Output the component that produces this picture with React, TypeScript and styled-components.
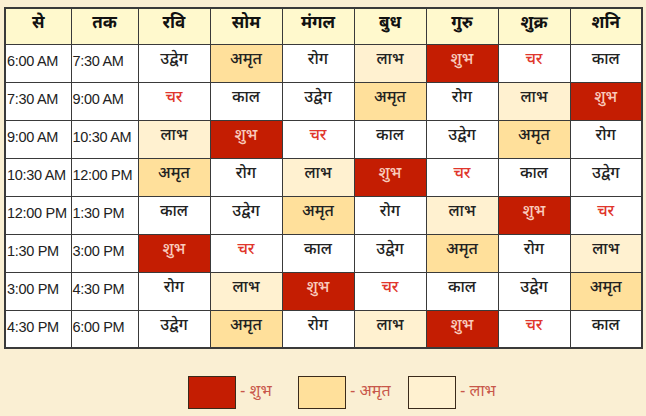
import React from 'react';
import styled, { createGlobalStyle } from 'styled-components';

type Kind = 'shubh' | 'amrit' | 'labh' | 'char' | 'plain';

const GlobalStyle = createGlobalStyle`
  html, body {
    margin: 0;
    padding: 0;
    background: #faefd3;
  }
`;

const hindiFont = `"Noto Sans Devanagari", "Lohit Devanagari", "Noto Sans", "DejaVu Sans", sans-serif`;

const days = ['रवि', 'सोम', 'मंगल', 'बुध', 'गुरु', 'शुक्र', 'शनि'];

const rows: { from: string; to: string; cells: string[] }[] = [
  { from: '6:00 AM', to: '7:30 AM', cells: ['उद्वेग', 'अमृत', 'रोग', 'लाभ', 'शुभ', 'चर', 'काल'] },
  { from: '7:30 AM', to: '9:00 AM', cells: ['चर', 'काल', 'उद्वेग', 'अमृत', 'रोग', 'लाभ', 'शुभ'] },
  { from: '9:00 AM', to: '10:30 AM', cells: ['लाभ', 'शुभ', 'चर', 'काल', 'उद्वेग', 'अमृत', 'रोग'] },
  { from: '10:30 AM', to: '12:00 PM', cells: ['अमृत', 'रोग', 'लाभ', 'शुभ', 'चर', 'काल', 'उद्वेग'] },
  { from: '12:00 PM', to: '1:30 PM', cells: ['काल', 'उद्वेग', 'अमृत', 'रोग', 'लाभ', 'शुभ', 'चर'] },
  { from: '1:30 PM', to: '3:00 PM', cells: ['शुभ', 'चर', 'काल', 'उद्वेग', 'अमृत', 'रोग', 'लाभ'] },
  { from: '3:00 PM', to: '4:30 PM', cells: ['रोग', 'लाभ', 'शुभ', 'चर', 'काल', 'उद्वेग', 'अमृत'] },
  { from: '4:30 PM', to: '6:00 PM', cells: ['उद्वेग', 'अमृत', 'रोग', 'लाभ', 'शुभ', 'चर', 'काल'] },
];

const kindOf = (name: string): Kind => {
  if (name === 'शुभ') return 'shubh';
  if (name === 'अमृत') return 'amrit';
  if (name === 'लाभ') return 'labh';
  if (name === 'चर') return 'char';
  return 'plain';
};

const cellBg: Record<Kind, string> = {
  shubh: '#c41d02',
  amrit: '#ffe09b',
  labh: '#fff1d0',
  char: '#ffffff',
  plain: '#ffffff',
};

const cellFg: Record<Kind, string> = {
  shubh: '#f9cbbd',
  amrit: '#222',
  labh: '#222',
  char: '#e0362c',
  plain: '#222',
};

const App: React.FC = () => (
  <Page>
    <GlobalStyle />
    <Grid>
      <colgroup>
        <col style={{ width: 66 }} />
        <col style={{ width: 67 }} />
        {days.map((d) => (
          <col key={d} style={{ width: 72 }} />
        ))}
      </colgroup>
      <thead>
        <tr>
          <HeadCell>से</HeadCell>
          <HeadCell>तक</HeadCell>
          {days.map((d) => (
            <HeadCell key={d}>{d}</HeadCell>
          ))}
        </tr>
      </thead>
      <tbody>
        {rows.map((r) => (
          <tr key={r.from}>
            <TimeCell>{r.from}</TimeCell>
            <TimeCell>{r.to}</TimeCell>
            {r.cells.map((c, i) => (
              <DayCell key={i} $kind={kindOf(c)}>
                {c}
              </DayCell>
            ))}
          </tr>
        ))}
      </tbody>
    </Grid>
    <Legend>
      <LegendItem>
        <Swatch $color="#c41d02" />
        <LegendText>- शुभ</LegendText>
      </LegendItem>
      <LegendItem>
        <Swatch $color="#ffe09b" />
        <LegendText>- अमृत</LegendText>
      </LegendItem>
      <LegendItem>
        <Swatch $color="#fff1d0" />
        <LegendText>- लाभ</LegendText>
      </LegendItem>
    </Legend>
  </Page>
);

const Page = styled.div`
  width: 646px;
  height: 416px;
  padding: 7px 0 0 4px;
  box-sizing: border-box;
  background: #faefd3;
  overflow: hidden;
`;

const Grid = styled.table`
  border-collapse: collapse;
  table-layout: fixed;
  width: 638px;
  border: 2px solid #3a3a3a;
`;

const HeadCell = styled.th`
  box-sizing: border-box;
  height: 36px;
  padding: 4px 0 0;
  vertical-align: top;
  line-height: 22px;
  background: #fff9cd;
  border: 1px solid #3a3a3a;
  font-family: ${hindiFont};
  font-size: 17px;
  font-weight: 700;
  color: #111;
  text-align: center;
`;

const TimeCell = styled.td`
  box-sizing: border-box;
  height: 38px;
  padding: 8px 0 0 1px;
  vertical-align: top;
  line-height: 16px;
  background: #ffffff;
  border: 1px solid #3a3a3a;
  font-family: "Liberation Sans", Arial, sans-serif;
  font-size: 14.5px;
  color: #222;
  white-space: nowrap;
  overflow: hidden;
  letter-spacing: -0.3px;
`;

const DayCell = styled.td<{ $kind: Kind }>`
  box-sizing: border-box;
  height: 38px;
  padding: 5px 0 0;
  vertical-align: top;
  line-height: 22px;
  background: ${({ $kind }) => cellBg[$kind]};
  color: ${({ $kind }) => cellFg[$kind]};
  border: 1px solid #3a3a3a;
  font-family: ${hindiFont};
  font-size: 16px;
  font-weight: 500;
  text-align: center;
`;

const Legend = styled.div`
  display: flex;
  margin: 27px 0 0 184px;
`;

const LegendItem = styled.div`
  display: flex;
  align-items: center;
  gap: 4px;
  width: 110px;
`;

const Swatch = styled.div<{ $color: string }>`
  width: 46px;
  height: 31px;
  background: ${({ $color }) => $color};
  border: 1px solid #3a2a1a;
`;

const LegendText = styled.span`
  font-family: ${hindiFont};
  font-size: 16px;
  color: #c8574a;
  white-space: nowrap;
`;

export default App;
